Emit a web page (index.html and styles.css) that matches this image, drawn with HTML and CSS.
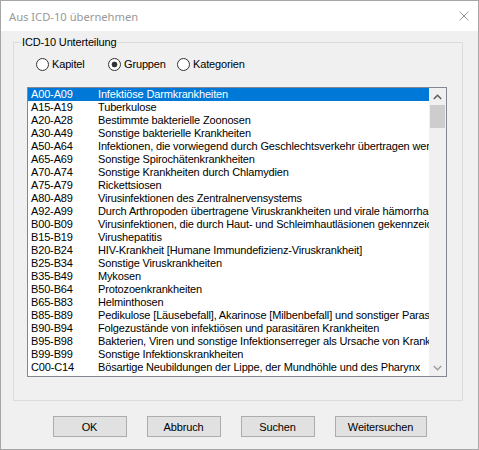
FILE: index.html
```html
<!DOCTYPE html>
<html lang="de">
<head>
  <meta charset="UTF-8">
  <meta name="viewport" content="width=device-width, initial-scale=1.0">
  <title>Aus ICD-10 übernehmen</title>
  <link rel="stylesheet" href="styles.css">
</head>
<body>
  <div class="window">
    <div class="titlebar">
      <span class="title">Aus ICD-10 übernehmen</span>
      <svg class="close" width="10" height="10" viewBox="0 0 10 10">
        <path d="M0.5 0.5 L9.5 9.5 M9.5 0.5 L0.5 9.5" stroke="#9a9a9a" stroke-width="1" fill="none"/>
      </svg>
    </div>

    <div class="client">
      <fieldset class="group">
        <legend>ICD-10 Unterteilung</legend>

        <div class="radios">
          <label class="radio"><input type="radio" name="teil"> Kapitel</label>
          <label class="radio"><input type="radio" name="teil" checked> Gruppen</label>
          <label class="radio"><input type="radio" name="teil"> Kategorien</label>
        </div>

        <div class="listbox">
          <ul class="rows">
            <li class="row selected"><span class="code">A00-A09</span><span class="desc">Infektiöse Darmkrankheiten</span></li>
            <li class="row"><span class="code">A15-A19</span><span class="desc">Tuberkulose</span></li>
            <li class="row"><span class="code">A20-A28</span><span class="desc">Bestimmte bakterielle Zoonosen</span></li>
            <li class="row"><span class="code">A30-A49</span><span class="desc">Sonstige bakterielle Krankheiten</span></li>
            <li class="row"><span class="code">A50-A64</span><span class="desc">Infektionen, die vorwiegend durch Geschlechtsverkehr übertragen werden</span></li>
            <li class="row"><span class="code">A65-A69</span><span class="desc">Sonstige Spirochätenkrankheiten</span></li>
            <li class="row"><span class="code">A70-A74</span><span class="desc">Sonstige Krankheiten durch Chlamydien</span></li>
            <li class="row"><span class="code">A75-A79</span><span class="desc">Rickettsiosen</span></li>
            <li class="row"><span class="code">A80-A89</span><span class="desc">Virusinfektionen des Zentralnervensystems</span></li>
            <li class="row"><span class="code">A92-A99</span><span class="desc">Durch Arthropoden übertragene Viruskrankheiten und virale hämorrhagische Fieber</span></li>
            <li class="row"><span class="code">B00-B09</span><span class="desc">Virusinfektionen, die durch Haut- und Schleimhautläsionen gekennzeichnet sind</span></li>
            <li class="row"><span class="code">B15-B19</span><span class="desc">Virushepatitis</span></li>
            <li class="row"><span class="code">B20-B24</span><span class="desc">HIV-Krankheit [Humane Immundefizienz-Viruskrankheit]</span></li>
            <li class="row"><span class="code">B25-B34</span><span class="desc">Sonstige Viruskrankheiten</span></li>
            <li class="row"><span class="code">B35-B49</span><span class="desc">Mykosen</span></li>
            <li class="row"><span class="code">B50-B64</span><span class="desc">Protozoenkrankheiten</span></li>
            <li class="row"><span class="code">B65-B83</span><span class="desc">Helminthosen</span></li>
            <li class="row"><span class="code">B85-B89</span><span class="desc">Pedikulose [Läusebefall], Akarinose [Milbenbefall] und sonstiger Parasitenbefall der Haut</span></li>
            <li class="row"><span class="code">B90-B94</span><span class="desc">Folgezustände von infektiösen und parasitären Krankheiten</span></li>
            <li class="row"><span class="code">B95-B98</span><span class="desc">Bakterien, Viren und sonstige Infektionserreger als Ursache von Krankheiten</span></li>
            <li class="row"><span class="code">B99-B99</span><span class="desc">Sonstige Infektionskrankheiten</span></li>
            <li class="row"><span class="code">C00-C14</span><span class="desc">Bösartige Neubildungen der Lippe, der Mundhöhle und des Pharynx</span></li>
          </ul>

          <div class="scrollbar">
            <div class="arrow">
              <svg width="9" height="6" viewBox="0 0 9 6"><polyline points="0.8,5 4.5,1.3 8.2,5" stroke="#606060" stroke-width="1.6" fill="none"/></svg>
            </div>
            <div class="thumb"></div>
            <div class="track"></div>
            <div class="arrow">
              <svg width="9" height="6" viewBox="0 0 9 6"><polyline points="0.8,1 4.5,4.7 8.2,1" stroke="#a0a0a0" stroke-width="1.6" fill="none"/></svg>
            </div>
          </div>
        </div>
      </fieldset>

      <div class="buttons">
        <button class="btn">OK</button>
        <button class="btn">Abbruch</button>
        <button class="btn">Suchen</button>
        <button class="btn wide">Weitersuchen</button>
      </div>
    </div>
  </div>
</body>
</html>
```

FILE: styles.css
```css
body {
  margin: 0;
  background-color: #f0f0f0;
  font-family: "Liberation Sans", Arial, sans-serif;
  font-size: 11px;
  letter-spacing: -0.15px;
  color: #000;
}
.window {
  box-sizing: border-box;
  width: 479px;
  height: 450px;
  border: 1px solid #a6a6a6;
  background: #f0f0f0;
  display: flex;
  flex-direction: column;
}
.titlebar {
  height: 30px;
  background: #fff;
  display: flex;
  align-items: center;
  justify-content: space-between;
  padding: 0 9px 0 8px;
}
.title {
  font-family: "Noto Sans", "Open Sans", sans-serif;
  font-size: 11.2px;
  letter-spacing: 0;
  color: #999;
}
.client {
  flex: 1;
}
.group {
  box-sizing: border-box;
  width: 450px;
  margin: 4px 0 0 12px;
  padding: 7px 15px 23px 13px;
  border: 1px solid #dcdcdc;
}
.group legend {
  margin-left: -6px;
  padding: 0 1px;
  line-height: 14px;
}
.radios {
  display: grid;
  grid-template-columns: 72px 69px auto;
  padding-left: 9px;
  height: 16px;
  align-items: center;
}
.radio {
  display: flex;
  align-items: center;
  gap: 3px;
}
.radio input {
  appearance: none;
  margin: 0;
  width: 13px;
  height: 13px;
  border: 1px solid #333;
  border-radius: 50%;
  background: #fff;
}
.radio input:checked {
  background: radial-gradient(circle, #333 0 2.6px, #fff 3.2px);
}
.listbox {
  margin-top: 15px;
  box-sizing: border-box;
  width: 420px;
  height: 290px;
  border: 1px solid #828790;
  background: #fff;
  display: flex;
}
.rows {
  flex: 1;
  margin: 0;
  padding: 0;
  list-style: none;
  overflow: hidden;
}
.row {
  height: 13px;
  line-height: 13px;
  display: flex;
  white-space: nowrap;
  padding-left: 3px;
}
.row.selected {
  background: #0078d7;
  color: #fff;
}
.code {
  flex: none;
  width: 67px;
}
.scrollbar {
  width: 17px;
  background: #f0f0f0;
  display: flex;
  flex-direction: column;
}
.arrow {
  height: 17px;
  display: flex;
  align-items: center;
  justify-content: center;
}
.thumb {
  height: 23px;
  margin: 0 1px;
  background: #cdcdcd;
}
.track {
  flex: 1;
}
.buttons {
  display: flex;
  justify-content: center;
  gap: 20px;
  margin-top: 15px;
}
.btn {
  box-sizing: border-box;
  width: 74px;
  height: 21px;
  padding: 0;
  border: 1px solid #adadad;
  background: #e1e1e1;
  font-family: "Liberation Sans", Arial, sans-serif;
  font-size: 11px;
  letter-spacing: -0.15px;
  color: #000;
}
.btn.wide {
  width: 92px;
}
```
